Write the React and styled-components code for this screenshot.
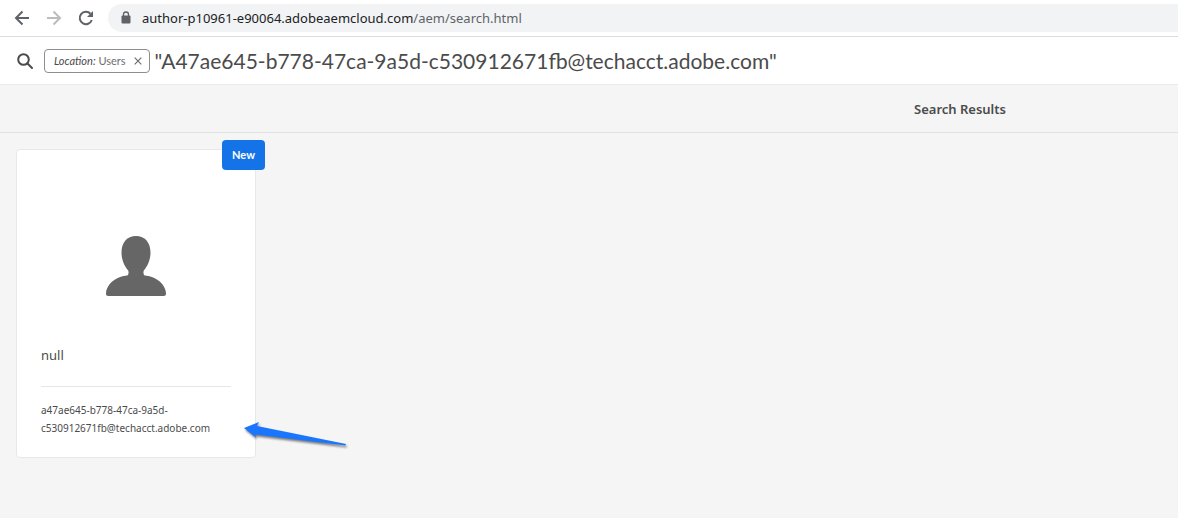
import React from "react";
import styled, { createGlobalStyle } from "styled-components";

const GlobalStyle = createGlobalStyle`
  *, *::before, *::after { box-sizing: border-box; }
  body {
    margin: 0;
    background: #f5f5f5;
    color: #4b4b4b;
    font-family: "Noto Sans", "Open Sans", sans-serif;
  }
  button { padding: 0; border: 0; background: none; color: inherit; }
`;

const Page = styled.div`
  min-height: 100vh;
  overflow-x: hidden;
`;

const BrowserBar = styled.header`
  display: flex;
  align-items: center;
  height: 37px;
  padding-left: 12px;
  background: #fff;
  border-bottom: 1px solid #dadce0;
`;

const NavButton = styled.button`
  display: grid;
  place-items: center;
  width: 20px;
  height: 20px;
  margin-right: 12px;
  color: ${({ disabled }) => (disabled ? "#babcbe" : "#5f6368")};
`;

const AddressBar = styled.div`
  flex: 1;
  display: flex;
  align-items: center;
  gap: 11px;
  height: 28px;
  padding-left: 13px;
  background: #f1f3f4;
  border-radius: 14px 0 0 14px;
  font-size: 13px;
  line-height: 20px;
  color: #5f6368;
`;

const Host = styled.span`
  color: #202124;
`;

const SearchBar = styled.form`
  display: flex;
  align-items: center;
  height: 48px;
  padding-left: 17px;
  background: #fff;
  border-bottom: 1px solid #eaeaea;
`;

const SearchButton = styled.button`
  display: grid;
  place-items: center;
  width: 16px;
  height: 16px;
  margin-right: 11px;
`;

const Tag = styled.span`
  display: flex;
  align-items: center;
  gap: 8px;
  height: 24px;
  padding: 0 7px 0 9px;
  border: 1px solid #8e8e8e;
  border-radius: 4px;
  font-family: Lato, sans-serif;
  font-size: 11px;
  line-height: 16px;
  color: #6e6e6e;
  white-space: nowrap;
`;

const TagKey = styled.em`
  color: #4b4b4b;
`;

const TagRemove = styled.button`
  display: grid;
  place-items: center;
  width: 8px;
  height: 8px;
  color: #6e6e6e;
`;

const SearchInput = styled.input`
  flex: 1;
  min-width: 0;
  padding: 0 5px;
  border: 0;
  outline: 0;
  background: transparent;
  color: #4b4b4b;
  font-family: Lato, sans-serif;
  font-size: 21px;
  line-height: 32px;
`;

const ResultsBar = styled.div`
  display: flex;
  align-items: center;
  justify-content: flex-end;
  height: 48px;
  padding-right: 172px;
  border-bottom: 1px solid #e1e1e1;
`;

const ResultsTitle = styled.h1`
  margin: 0;
  font-size: 13px;
  line-height: 20px;
  font-weight: 600;
`;

const Results = styled.main`
  display: flex;
  flex-wrap: wrap;
  gap: 16px;
  padding: 16px;
`;

const Card = styled.article`
  position: relative;
  width: 240px;
  padding: 0 24px 20px;
  background: #fff;
  border: 1px solid #e8e8e8;
  border-radius: 4px;
`;

const Badge = styled.span`
  position: absolute;
  top: -10px;
  right: -10px;
  padding: 7px 10px;
  background: #1473e6;
  border-radius: 4px;
  color: #fff;
  font-family: Lato, sans-serif;
  font-size: 11px;
  line-height: 16px;
  font-weight: 700;
`;

const Preview = styled.div`
  display: grid;
  place-items: center;
  padding: 86px 0 48px;
`;

const CardTitle = styled.h2`
  margin: 0;
  padding-bottom: 20px;
  border-bottom: 1px solid #e6e6e6;
  font-size: 13px;
  line-height: 22px;
  font-weight: 400;
`;

const CardText = styled.p`
  margin: 14px 0 0;
  font-size: 10px;
  line-height: 18px;
  overflow-wrap: break-word;
`;

const Pointer = styled.svg`
  position: absolute;
  left: 226px;
  bottom: 6px;
  overflow: visible;
  filter: drop-shadow(1px 2px 1px rgba(0, 0, 0, 0.5));
`;

export default function App() {
  return (
    <Page>
      <GlobalStyle />
      <BrowserBar>
        <NavButton type="button" aria-label="Back">
          <svg width="20" height="20" viewBox="0 0 20 20" fill="none" stroke="currentColor" strokeWidth="2">
            <path d="M17 10H4M10.500 3.500 4 10l6.500 6.500" />
          </svg>
        </NavButton>
        <NavButton type="button" aria-label="Forward" disabled>
          <svg width="20" height="20" viewBox="0 0 20 20" fill="none" stroke="currentColor" strokeWidth="2">
            <path d="M3 10h13M9.500 3.500 16 10l-6.500 6.500" />
          </svg>
        </NavButton>
        <NavButton type="button" aria-label="Reload">
          <svg width="20" height="20" viewBox="0 0 20 20">
            <path d="M15.800 12A6.200 6.200 0 1 1 14.500 5.700" fill="none" stroke="currentColor" strokeWidth="2" />
            <path d="M17 3v6h-6z" fill="currentColor" />
          </svg>
        </NavButton>
        <AddressBar>
          <svg width="10" height="14" viewBox="0 0 10 14" aria-hidden="true">
            <rect x="0.500" y="4.500" width="9" height="8" rx="1" fill="#5f6368" />
            <path d="M2.500 5V3.500a2.500 2.500 0 0 1 5 0V5" fill="none" stroke="#5f6368" strokeWidth="1.300" />
          </svg>
          <span><Host>author-p10961-e90064.adobeaemcloud.com</Host>/aem/search.html</span>
        </AddressBar>
      </BrowserBar>

      <SearchBar onSubmit={(e) => e.preventDefault()}>
        <SearchButton type="submit" aria-label="Search">
          <svg width="16" height="16" viewBox="0 0 16 16" fill="none" stroke="currentColor" strokeWidth="2" strokeLinecap="round">
            <circle cx="6.500" cy="6.500" r="5.300" />
            <path d="m10.500 10.500 4.500 4.500" />
          </svg>
        </SearchButton>
        <Tag>
          <span><TagKey>Location:</TagKey> Users</span>
          <TagRemove type="button" aria-label="Remove location filter">
            <svg width="8" height="8" viewBox="0 0 8 8" stroke="currentColor" strokeWidth="1.200">
              <path d="m.7.7 6.600 6.600M7.300.7.7 7.300" />
            </svg>
          </TagRemove>
        </Tag>
        <SearchInput aria-label="Search query" defaultValue={'"A47ae645-b778-47ca-9a5d-c530912671fb@techacct.adobe.com"'} />
      </SearchBar>

      <ResultsBar>
        <ResultsTitle>Search Results</ResultsTitle>
      </ResultsBar>

      <Results>
        <Card>
          <Badge>New</Badge>
          <Preview>
            <svg width="60" height="60" viewBox="0 0 60 60" fill="#666" aria-hidden="true">
              <path d="M30 0C39 0 44.500 6.500 44.500 16.500 44.500 24 41.500 30 38 34.200 37 35.500 37.300 39.200 39 39.500 52 40.500 60 50 60 57.500 60 59.300 59.200 60 57.500 60H2.500C.8 60 0 59.300 0 57.500 0 50 8 40.500 21 39.500 22.700 39.200 23 35.500 22 34.200 18.500 30 15.500 24 15.500 16.500 15.500 6.500 21 0 30 0Z" />
            </svg>
          </Preview>
          <CardTitle>null</CardTitle>
          <CardText>a47ae645-b778-47ca-9a5d-c530912671fb@techacct.adobe.com</CardText>
          <Pointer width="104" height="30" viewBox="0 0 104 30" aria-hidden="true">
            <path d="M1 7 16 1 14 5 103 23 102.500 24.500 12 13.500 13 16.500Z" fill="#1a75ff" />
          </Pointer>
        </Card>
      </Results>
    </Page>
  );
}
